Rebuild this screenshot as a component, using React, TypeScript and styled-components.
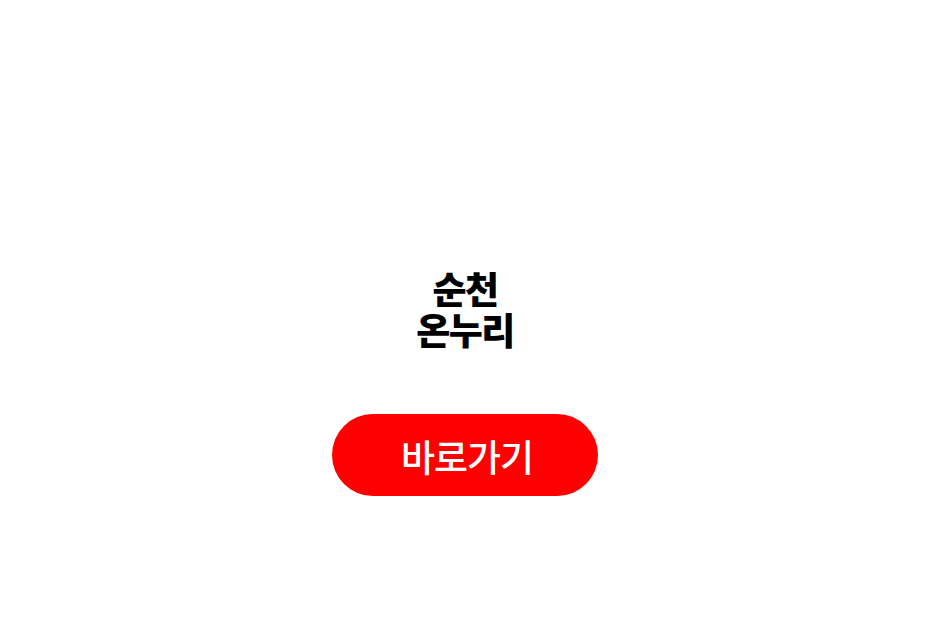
import styled, { createGlobalStyle } from 'styled-components';

const GlobalStyle = createGlobalStyle`
  html, body {
    margin: 0;
    padding: 0;
    background: #ffffff;
  }
  body {
    font-family: "Noto Sans CJK KR", "Noto Sans", sans-serif;
  }
`;

const Page = styled.main`
  display: flex;
  flex-direction: column;
  align-items: center;
  width: 100%;
  height: 620px;
  padding-top: 268px;
  box-sizing: border-box;
`;

const Title = styled.h1`
  display: flex;
  flex-direction: column;
  align-items: center;
  margin: 0;
  color: #000000;
`;

const TitleLine = styled.span`
  display: block;
  height: 41px;
  font-size: 37px;
  line-height: 41px;
  font-weight: 900;
  letter-spacing: -1.5px;
`;

const GoButton = styled.a`
  display: flex;
  align-items: center;
  justify-content: center;
  margin-top: 64px;
  width: 266px;
  height: 82px;
  border-radius: 41px;
  background: #ff0000;
  color: #ffffff;
  font-size: 37px;
  font-weight: 500;
  text-decoration: none;
  letter-spacing: -1px;
  padding: 2px 0 0 4px;
  box-sizing: border-box;
`;

export default function App() {
  return (
    <>
      <GlobalStyle />
      <Page>
        <Title>
          <TitleLine>순천</TitleLine>
          <TitleLine>온누리</TitleLine>
        </Title>
        <GoButton href="#">바로가기</GoButton>
      </Page>
    </>
  );
}
